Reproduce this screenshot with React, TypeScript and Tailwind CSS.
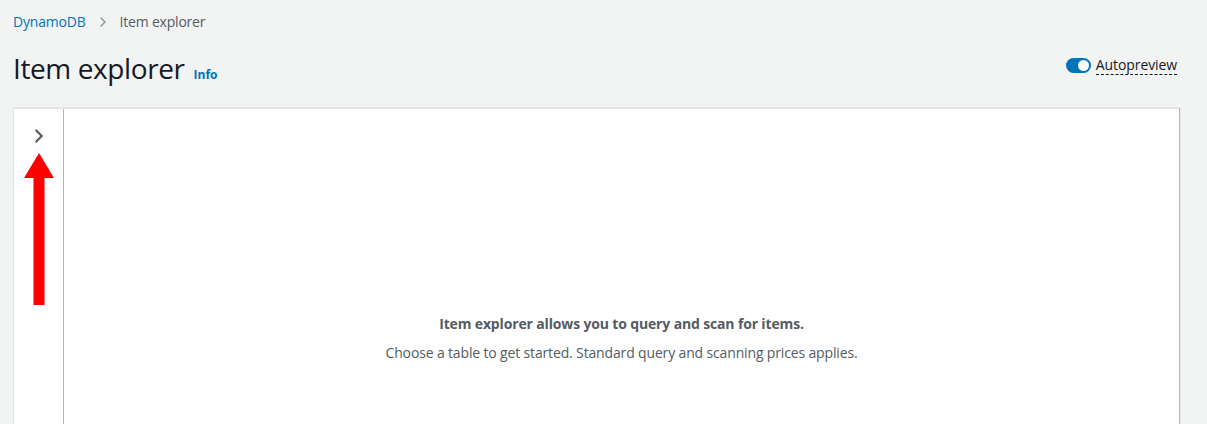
import { ChevronRight } from "lucide-react";

function Toggle() {
  return (
    <span className="relative inline-flex h-[15px] w-[25px] items-center rounded-full bg-[#0073bb]">
      <span className="absolute right-[2px] h-[11px] w-[11px] rounded-full bg-white" />
    </span>
  );
}

function UpArrow() {
  return (
    <svg width="32" height="154" viewBox="0 0 32 154" className="block">
      <polygon points="16,0 31,25 1,25" fill="#ff0000" />
      <rect x="10.5" y="24" width="11" height="128" fill="#ff0000" />
    </svg>
  );
}

export default function App() {
  return (
    <div
      className="h-[424px] w-full overflow-hidden bg-[#f2f3f3] text-[#16191f]"
      style={{ fontFamily: '"Open Sans", "Noto Sans", Arial, sans-serif' }}
    >
      <div className="flex items-center gap-[9px] pl-[13px] pt-[12px] text-[14px] leading-[20px] tracking-[-0.2px]">
        <span className="text-[#0073bb]">DynamoDB</span>
        <ChevronRight className="h-[16px] w-[16px] text-[#879596]" strokeWidth={2} />
        <span className="text-[#545b64]">Item explorer</span>
      </div>

      <div className="flex items-center justify-between pl-[13px] pr-[30px] pt-[18px]">
        <div className="flex items-baseline gap-[9px]">
          <h1 className="text-[28px] font-normal leading-[36px] tracking-[-0.4px]">Item explorer</h1>
          <span className="text-[12px] font-bold text-[#0073bb]">Info</span>
        </div>
        <div className="flex items-center gap-[5px] pb-[6px]">
          <Toggle />
          <span className="border-b border-dashed border-[#16191f] text-[14px] leading-[18px] tracking-[-0.1px]">
            Autopreview
          </span>
        </div>
      </div>

      <div className="ml-[13px] mr-[28px] mt-[22px] flex h-[340px] border-l border-t border-[#e1e4e4] bg-white shadow-[1px_0_1px_rgba(0,28,36,0.25)]">
        <div className="flex w-[50px] flex-col items-center border-r border-[#aab7b8] pt-[16px]">
          <ChevronRight className="h-[22px] w-[22px] text-[#545b64]" strokeWidth={2.4} />
          <div className="mt-[6px]">
            <UpArrow />
          </div>
        </div>
        <div className="flex flex-1 flex-col items-center pt-[205px] text-[14px] leading-[20px] tracking-[-0.15px] text-[#545b64]">
          <p className="font-bold">Item explorer allows you to query and scan for items.</p>
          <p className="mt-[9px]">Choose a table to get started. Standard query and scanning prices applies.</p>
        </div>
      </div>
    </div>
  );
}
